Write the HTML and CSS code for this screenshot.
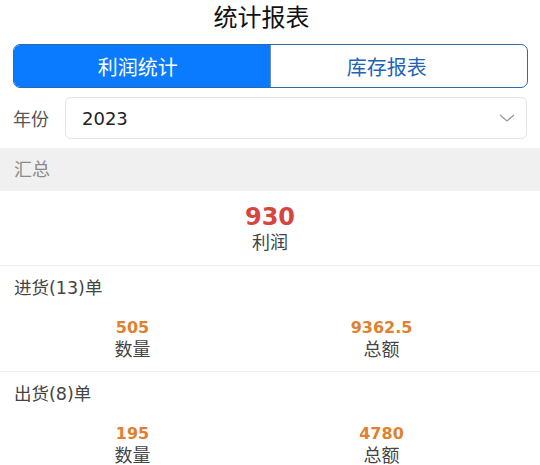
FILE: index.html
```html
<!DOCTYPE html>
<html lang="zh-CN">
<head>
    <meta charset="UTF-8">
    <meta name="viewport" content="width=device-width, initial-scale=1.0">
    <title>统计报表</title>
    <link rel="stylesheet" href="styles.css">
</head>
<body>
    <div class="page">
        <div class="title">统计报表</div>

        <div class="tabs">
            <div class="tab active">利润统计</div>
            <div class="tab">库存报表</div>
        </div>

        <div class="year-row">
            <span class="year-label">年份</span>
            <div class="select">
                <span>2023</span>
                <svg class="chevron" width="16" height="8" viewBox="0 0 16 8">
                    <polyline points="1,1 8,7 15,1" fill="none" stroke="#9a9a9a" stroke-width="1.3"/>
                </svg>
            </div>
        </div>

        <div class="group-title">汇总</div>

        <div class="summary">
            <div class="profit">930</div>
            <div class="caption">利润</div>
        </div>

        <div class="section">
            <div class="section-head">进货(13)单</div>
            <div class="stats">
                <div class="stat">
                    <div class="num">505</div>
                    <div class="caption">数量</div>
                </div>
                <div class="stat">
                    <div class="num">9362.5</div>
                    <div class="caption">总额</div>
                </div>
            </div>
        </div>

        <div class="section">
            <div class="section-head">出货(8)单</div>
            <div class="stats">
                <div class="stat">
                    <div class="num">195</div>
                    <div class="caption">数量</div>
                </div>
                <div class="stat">
                    <div class="num">4780</div>
                    <div class="caption">总额</div>
                </div>
            </div>
        </div>
    </div>
</body>
</html>
```

FILE: styles.css
```css
* {
    margin: 0;
    padding: 0;
    box-sizing: border-box;
}

body {
    background: #fff;
    font-family: "DejaVu Sans", "Noto Sans CJK SC", sans-serif;
    color: #333;
    overflow: hidden;
}

.page {
    width: 540px;
}

.title {
    height: 36px;
    line-height: 36px;
    padding-right: 17px;
    text-align: center;
    font-size: 24px;
    color: #111;
}

.tabs {
    display: flex;
    height: 44px;
    margin: 8px 12px 0 13px;
    border: 1px solid #2d6aa8;
    border-radius: 7px;
    overflow: hidden;
}

.tab {
    flex: none;
    width: 50%;
    display: flex;
    align-items: center;
    justify-content: center;
    padding-right: 24px;
    font-size: 20px;
    color: #1f65b3;
}

.tab.active {
    padding-right: 8px;
    background: #0a7bff;
    color: #fff;
    border-right: 1px solid #6a8fb8;
}

.year-row {
    display: flex;
    align-items: center;
    margin-top: 9px;
    padding: 0 13px;
}

.year-label {
    width: 52px;
    font-size: 18px;
    color: #555;
}

.select {
    flex: 1;
    height: 42px;
    display: flex;
    align-items: center;
    justify-content: space-between;
    padding: 0 11px 0 16px;
    border: 1px solid #e4e4e4;
    border-radius: 6px;
    font-size: 18px;
    color: #222;
}

.group-title {
    margin-top: 9px;
    height: 43px;
    line-height: 43px;
    padding-left: 14px;
    background: #f0f0f0;
    font-size: 18px;
    color: #8a8a8a;
}

.summary {
    padding: 11px 0;
    text-align: center;
    border-bottom: 1px solid #ececec;
}

.profit {
    height: 30px;
    line-height: 30px;
    font-size: 24px;
    font-weight: 700;
    color: #d4463f;
}

.caption {
    height: 22px;
    line-height: 22px;
    font-size: 18px;
    color: #444;
}

.section {
    border-bottom: 1px solid #ececec;
}

.section-head {
    height: 44px;
    line-height: 44px;
    padding-left: 14px;
    font-size: 17.5px;
    color: #444;
}

.stats {
    display: grid;
    grid-template-columns: 1fr 1fr;
    padding: 7px 34px 10px 8px;
}

.stat {
    text-align: center;
}

.num {
    height: 22px;
    line-height: 22px;
    font-size: 16px;
    font-weight: 700;
    color: #e0812f;
}
```
